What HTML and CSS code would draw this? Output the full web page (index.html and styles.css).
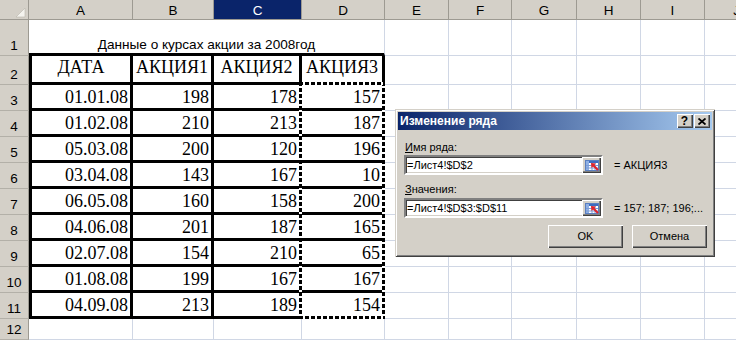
FILE: index.html
```html
<!DOCTYPE html>
<html lang="ru">
<head>
<meta charset="utf-8">
<link rel="stylesheet" href="styles.css">
</head>
<body>
<div class="sheet">
  <div class="corner"><svg width="29" height="20" viewBox="0 0 29 20"><polygon points="25,8 25,17 16,17" fill="#f4f3ee" stroke="#b9b6ad" stroke-width="0.6"/></svg></div>
  <div class="ch">A</div><div class="ch">B</div><div class="ch sel">C</div><div class="ch">D</div><div class="ch">E</div><div class="ch">F</div><div class="ch">G</div><div class="ch">H</div><div class="ch">I</div><div class="ch">J</div>

  <div class="rh">1</div>
  <div class="c caption">Данные о курсах акции за 2008год</div>
  <div class="c"></div><div class="c"></div><div class="c"></div><div class="c"></div><div class="c"></div><div class="c"></div>

  <div class="rh">2</div>
  <div class="c t tl hd">ДАТА</div><div class="c t hd">АКЦИЯ1</div><div class="c t hd">АКЦИЯ2</div><div class="c t hd">АКЦИЯ3</div>
  <div class="c"></div><div class="c"></div><div class="c"></div><div class="c"></div><div class="c"></div><div class="c"></div>

  <div class="rh">3</div>
  <div class="c t tl">01.01.08</div><div class="c t">198</div><div class="c t">178</div><div class="c t anchor">157<div class="marquee"></div></div>
  <div class="c"></div><div class="c"></div><div class="c"></div><div class="c"></div><div class="c"></div><div class="c"></div>

  <div class="rh">4</div>
  <div class="c t tl">01.02.08</div><div class="c t">210</div><div class="c t">213</div><div class="c t">187</div>
  <div class="c"></div><div class="c"></div><div class="c"></div><div class="c"></div><div class="c"></div><div class="c"></div>

  <div class="rh">5</div>
  <div class="c t tl">05.03.08</div><div class="c t">200</div><div class="c t">120</div><div class="c t">196</div>
  <div class="c"></div><div class="c"></div><div class="c"></div><div class="c"></div><div class="c"></div><div class="c"></div>

  <div class="rh">6</div>
  <div class="c t tl">03.04.08</div><div class="c t">143</div><div class="c t">167</div><div class="c t">10</div>
  <div class="c"></div><div class="c"></div><div class="c"></div><div class="c"></div><div class="c"></div><div class="c"></div>

  <div class="rh">7</div>
  <div class="c t tl">06.05.08</div><div class="c t">160</div><div class="c t">158</div><div class="c t">200</div>
  <div class="c"></div><div class="c"></div><div class="c"></div><div class="c"></div><div class="c"></div><div class="c"></div>

  <div class="rh">8</div>
  <div class="c t tl">04.06.08</div><div class="c t">201</div><div class="c t">187</div><div class="c t">165</div>
  <div class="c"></div><div class="c"></div><div class="c"></div><div class="c"></div><div class="c"></div><div class="c"></div>

  <div class="rh">9</div>
  <div class="c t tl">02.07.08</div><div class="c t">154</div><div class="c t">210</div><div class="c t">65</div>
  <div class="c"></div><div class="c"></div><div class="c"></div><div class="c"></div><div class="c"></div><div class="c"></div>

  <div class="rh">10</div>
  <div class="c t tl">01.08.08</div><div class="c t">199</div><div class="c t">167</div><div class="c t">167</div>
  <div class="c"></div><div class="c"></div><div class="c"></div><div class="c"></div><div class="c"></div><div class="c"></div>

  <div class="rh">11</div>
  <div class="c t tl">04.09.08</div><div class="c t">213</div><div class="c t">189</div><div class="c t">154</div>
  <div class="c"></div><div class="c"></div><div class="c"></div><div class="c"></div><div class="c"></div><div class="c"></div>

  <div class="rh">12</div>
  <div class="c"></div><div class="c"></div><div class="c"></div><div class="c"></div><div class="c"></div><div class="c"></div><div class="c"></div><div class="c"></div><div class="c"></div><div class="c"></div>
</div>

<div class="dialog">
  <div class="titlebar">
    <span class="title">Изменение ряда</span>
    <div class="tbtns">
      <div class="tbtn help">?</div>
      <div class="tbtn"><svg width="8" height="7" viewBox="0 0 8 7"><path d="M0.5 0.5 L7.5 6.5 M7.5 0.5 L0.5 6.5" stroke="#000" stroke-width="1.8"/></svg></div>
    </div>
  </div>
  <div class="body">
    <div class="label lbl1"><u>И</u>мя ряда:</div>
    <div class="row">
      <div class="field"><span class="ftext">=Лист4!$D$2</span><div class="refbtn"><svg width="16" height="13" viewBox="0 0 16 13"><rect x="1.5" y="1.5" width="13" height="10" fill="#fff" stroke="#5a7fc0"/><rect x="2" y="2" width="12" height="2" fill="#3d6cc0"/><rect x="2" y="2" width="3" height="9" fill="#8fb0e4"/><path d="M8 4 V11 M11 4 V11 M2 6.5 H14 M2 9 H14" stroke="#7b9bd6" stroke-width="1"/><path d="M14 11 L9.5 6.5" stroke="#e0242a" stroke-width="2.2"/><polygon points="7,4 12,4.5 7.5,9" fill="#e0242a"/></svg></div></div>
      <span class="val">= АКЦИЯ3</span>
    </div>
    <div class="label lbl2"><u>З</u>начения:</div>
    <div class="row">
      <div class="field"><span class="ftext">=Лист4!$D$3:$D$11</span><div class="refbtn"><svg width="16" height="13" viewBox="0 0 16 13"><rect x="1.5" y="1.5" width="13" height="10" fill="#fff" stroke="#5a7fc0"/><rect x="2" y="2" width="12" height="2" fill="#3d6cc0"/><rect x="2" y="2" width="3" height="9" fill="#8fb0e4"/><path d="M8 4 V11 M11 4 V11 M2 6.5 H14 M2 9 H14" stroke="#7b9bd6" stroke-width="1"/><path d="M14 11 L9.5 6.5" stroke="#e0242a" stroke-width="2.2"/><polygon points="7,4 12,4.5 7.5,9" fill="#e0242a"/></svg></div></div>
      <span class="val">= 157; 187; 196;...</span>
    </div>
    <div class="buttons">
      <div class="btn">OK</div>
      <div class="btn">Отмена</div>
    </div>
  </div>
</div>
</body>
</html>
```
FILE: styles.css
```css
html, body {
  margin: 0;
  padding: 0;
}
body {
  width: 736px;
  height: 340px;
  overflow: hidden;
  position: relative;
  background: #fff;
  font-family: "Liberation Sans", Arial, sans-serif;
}

.sheet {
  display: grid;
  grid-template-columns: 29px 104px 81px 88px 83px 64px 63px 65px 64px 64px 64px;
  grid-template-rows: 20px 36px 29px repeat(9, 26px) 21px;
  width: 769px;
}

.corner {
  background: #d4d0c8;
  border-right: 1px solid #9d9a92;
  border-bottom: 1px solid #9d9a92;
  box-sizing: border-box;
  overflow: hidden;
}
.corner svg { display: block; }

.ch {
  background: #d4d0c8;
  border-right: 1px solid #9d9a92;
  border-bottom: 1px solid #9d9a92;
  box-sizing: border-box;
  display: flex;
  align-items: flex-end;
  justify-content: center;
  font-size: 13.5px;
  line-height: 1;
  padding-bottom: 2px;
  color: #000;
}
.ch.sel {
  background: #0a246a;
  color: #fff;
}

.rh {
  background: #d4d0c8;
  border-right: 1px solid #9d9a92;
  border-bottom: 1px solid #b3b0a8;
  box-sizing: border-box;
  display: flex;
  align-items: flex-end;
  justify-content: center;
  font-size: 13.5px;
  line-height: 1;
  padding-bottom: 3px;
  color: #000;
}

.c {
  border-right: 1px solid #d0d7e5;
  border-bottom: 1px solid #d0d7e5;
  box-sizing: border-box;
  display: flex;
  align-items: flex-end;
  justify-content: flex-end;
  font-family: "Liberation Serif", "Times New Roman", serif;
  font-size: 18px;
  line-height: 1;
  padding: 0 2px 2px 0;
  color: #000;
  white-space: nowrap;
}

.c.caption {
  grid-column: span 4;
  justify-content: center;
  font-family: "Liberation Sans", Arial, sans-serif;
  font-size: 13.6px;
  padding: 0 0 1px 0;
  border-right: 1px solid #d0d7e5;
  border-bottom: 3px solid #000;
}

.c.t {
  border-right: 3px solid #000;
  border-bottom: 3px solid #000;
}
.c.tl {
  border-left: 3px solid #000;
}
.c.hd {
  justify-content: center;
  padding: 0 0 6px 0;
}

.c.anchor {
  position: relative;
}

/* copy marquee over D3:D11 */
.marquee {
  position: absolute;
  left: -3px;
  top: -3px;
  width: 86px;
  height: 237px;
  z-index: 1;
  pointer-events: none;
  background:
    repeating-linear-gradient(90deg, #000 0 4px, #fff 4px 6px) left top / 100% 3px no-repeat,
    repeating-linear-gradient(90deg, #000 0 4px, #fff 4px 6px) left bottom / 100% 3px no-repeat,
    repeating-linear-gradient(180deg, #000 0 4px, #fff 4px 6px) left top / 3px 100% no-repeat,
    repeating-linear-gradient(180deg, #000 0 4px, #fff 4px 6px) right top / 3px 100% no-repeat;
}

/* dialog */
.dialog {
  position: absolute;
  left: 395px;
  top: 109px;
  width: 320px;
  height: 148px;
  box-sizing: border-box;
  background: #d4d0c8;
  padding: 3px;
  box-shadow:
    inset 1px 1px 0 #d4d0c8,
    inset -1px -1px 0 #404040,
    inset 2px 2px 0 #fff,
    inset -2px -2px 0 #808080;
  font-family: "Liberation Sans", Arial, sans-serif;
  font-size: 11px;
  color: #000;
  z-index: 5;
}

.titlebar {
  height: 18px;
  background: linear-gradient(90deg, #0a246a, #a6caf0);
  display: flex;
  align-items: center;
  justify-content: space-between;
  padding: 0 2px 0 2px;
}
.title {
  color: #fff;
  font-weight: bold;
  font-size: 12px;
  line-height: 18px;
}
.tbtns {
  display: flex;
  gap: 1px;
}
.tbtn {
  width: 16px;
  height: 14px;
  box-sizing: border-box;
  background: #d4d0c8;
  box-shadow:
    inset 1px 1px 0 #fff,
    inset -1px -1px 0 #404040,
    inset -2px -2px 0 #808080;
  display: flex;
  align-items: center;
  justify-content: center;
}
.tbtn.help {
  font-weight: bold;
  font-size: 12px;
  line-height: 1;
  padding: 0 1px 1px 0;
}

.body {
  display: flex;
  flex-direction: column;
  padding: 0 0 0 6px;
}
.label {
  line-height: 13px;
  padding-left: 1px;
}
.lbl1 { margin-top: 11px; }
.lbl2 { margin-top: 8px; }
.label u { text-decoration: underline; }

.row {
  display: flex;
  align-items: center;
  gap: 11px;
  margin-top: 1px;
}
.lbl2 + .row { margin-top: 2px; }

.field {
  width: 199px;
  height: 20px;
  box-sizing: border-box;
  background: #fff;
  border-style: solid;
  border-width: 2px;
  border-color: #808080 #fff #fff #808080;
  box-shadow: inset 1px 1px 0 #404040, inset -1px -1px 0 #d4d0c8;
  display: flex;
  align-items: center;
  justify-content: space-between;
  padding-left: 1px;
}
.ftext {
  line-height: 16px;
}
.refbtn {
  width: 19px;
  height: 16px;
  box-sizing: border-box;
  background: #d4d0c8;
  box-shadow:
    inset 1px 1px 0 #fff,
    inset -1px -1px 0 #404040,
    inset -2px -2px 0 #808080;
  display: flex;
  align-items: center;
  justify-content: center;
}
.refbtn svg { display: block; }

.val {
  line-height: 13px;
  white-space: nowrap;
}

.buttons {
  display: flex;
  justify-content: flex-end;
  gap: 9px;
  margin-top: 7px;
  padding-right: 5px;
}
.btn {
  width: 75px;
  height: 23px;
  box-sizing: border-box;
  background: #d4d0c8;
  box-shadow:
    inset 1px 1px 0 #fff,
    inset -1px -1px 0 #404040,
    inset -2px -2px 0 #808080;
  display: flex;
  align-items: center;
  justify-content: center;
  line-height: 1;
}
```
